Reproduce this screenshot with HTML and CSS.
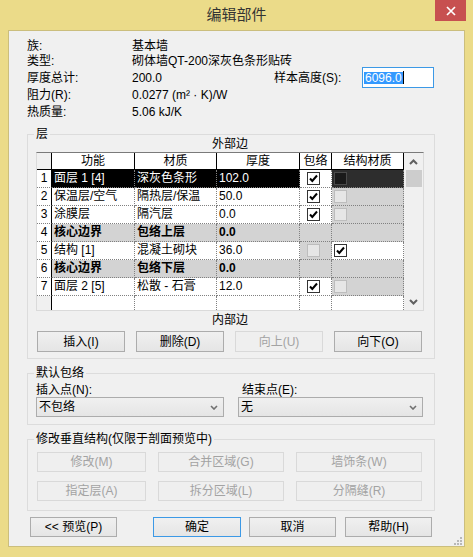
FILE: index.html
```html
<!DOCTYPE html>
<html>
<head>
<meta charset="utf-8">
<link rel="stylesheet" href="styles.css">
</head>
<body>
<div class="window">
  <div class="titlebar">
    <div class="title">编辑部件</div>
    <div class="close"><svg width="10" height="10" viewBox="0 0 10 10"><path d="M1 1L9 9M9 1L1 9" stroke="#fff" stroke-width="1.7" fill="none"/></svg></div>
  </div>
  <div class="client">
    <div class="info">
      <div>族:</div><div class="span3">基本墙</div>
      <div>类型:</div><div class="span3">砌体墙QT-200深灰色条形贴砖</div>
      <div>厚度总计:</div><div>200.0</div><div>样本高度(S):</div>
      <div class="input"><span class="selected">6096.0</span><span class="caret"></span></div>
      <div>阻力(R):</div><div class="span3">0.0277 (m² · K)/W</div>
      <div>热质量:</div><div class="span3">5.06 kJ/K</div>
    </div>

    <fieldset class="group layers">
      <legend>层</legend>
      <div class="edge top">外部边</div>
      <div class="table">
        <div class="grid">
          <div class="h corner"></div><div class="h">功能</div><div class="h">材质</div><div class="h">厚度</div><div class="h">包络</div><div class="h">结构材质</div>

          <div class="n">1</div><div class="c sel">面层 1 [4]</div><div class="c sel">深灰色条形</div><div class="c sel">102.0</div><div class="c wrap"><span class="cb on"></span></div><div class="c dark"><span class="cb darkbox"></span></div>

          <div class="n">2</div><div class="c">保温层/空气</div><div class="c">隔热层/保温</div><div class="c">50.0</div><div class="c wrap"><span class="cb on"></span></div><div class="c gray"><span class="cb off"></span></div>

          <div class="n">3</div><div class="c">涂膜层</div><div class="c">隔汽层</div><div class="c">0.0</div><div class="c wrap"><span class="cb on"></span></div><div class="c gray"><span class="cb off"></span></div>

          <div class="n">4</div><div class="c gray b">核心边界</div><div class="c gray b">包络上层</div><div class="c gray b">0.0</div><div class="c gray"></div><div class="c gray"></div>

          <div class="n">5</div><div class="c">结构 [1]</div><div class="c">混凝土砌块</div><div class="c">36.0</div><div class="c gray wrap"><span class="cb off"></span></div><div class="c"><span class="cb on"></span></div>

          <div class="n">6</div><div class="c gray b">核心边界</div><div class="c gray b">包络下层</div><div class="c gray b">0.0</div><div class="c gray"></div><div class="c gray"></div>

          <div class="n">7</div><div class="c">面层 2 [5]</div><div class="c">松散 - 石膏</div><div class="c">12.0</div><div class="c wrap"><span class="cb on"></span></div><div class="c gray"><span class="cb off"></span></div>

          <div class="n empty"></div><div class="c last"></div><div class="c last"></div><div class="c last"></div><div class="c last"></div><div class="c last"></div>
        </div>
        <div class="vscroll">
          <div class="arrow"><svg width="9" height="6" viewBox="0 0 9 6"><path d="M1 5L4.5 1.5L8 5" stroke="#606060" stroke-width="2" fill="none"/></svg></div>
          <div class="thumb"></div>
          <div class="track"></div>
          <div class="arrow"><svg width="9" height="6" viewBox="0 0 9 6"><path d="M1 1L4.5 4.5L8 1" stroke="#606060" stroke-width="2" fill="none"/></svg></div>
        </div>
      </div>
      <div class="edge bottom">内部边</div>
      <div class="btnrow4">
        <div class="btn">插入(I)</div>
        <div class="btn">删除(D)</div>
        <div class="btn dis">向上(U)</div>
        <div class="btn">向下(O)</div>
      </div>
    </fieldset>

    <fieldset class="group wrapgrp">
      <legend>默认包络</legend>
      <div class="wrapgrid">
        <div class="flabel">插入点(N):</div>
        <div class="flabel second">结束点(E):</div>
        <div class="combo"><span>不包络</span><svg width="8" height="5" viewBox="0 0 8 5"><path d="M1 1L4 4L7 1" stroke="#707070" stroke-width="1.6" fill="none"/></svg></div>
        <div class="combo"><span>无</span><svg width="8" height="5" viewBox="0 0 8 5"><path d="M1 1L4 4L7 1" stroke="#707070" stroke-width="1.6" fill="none"/></svg></div>
      </div>
    </fieldset>

    <fieldset class="group vert">
      <legend>修改垂直结构(仅限于剖面预览中)</legend>
      <div class="vertgrid">
        <div class="btn dis">修改(M)</div>
        <div class="btn dis">合并区域(G)</div>
        <div class="btn dis">墙饰条(W)</div>
        <div class="btn dis">指定层(A)</div>
        <div class="btn dis">拆分区域(L)</div>
        <div class="btn dis">分隔缝(R)</div>
      </div>
    </fieldset>

    <div class="bottombar">
      <div class="btn preview">&lt;&lt; 预览(P)</div>
      <div class="btn ok">确定</div>
      <div class="btn cancel">取消</div>
      <div class="btn help">帮助(H)</div>
    </div>

    <svg class="grip" width="9" height="9" viewBox="0 0 9 9">
      <rect x="7" y="1" width="2" height="2" fill="#B8B8B8"/>
      <rect x="4" y="4" width="2" height="2" fill="#B8B8B8"/>
      <rect x="7" y="4" width="2" height="2" fill="#B8B8B8"/>
      <rect x="1" y="7" width="2" height="2" fill="#B8B8B8"/>
      <rect x="4" y="7" width="2" height="2" fill="#B8B8B8"/>
      <rect x="7" y="7" width="2" height="2" fill="#B8B8B8"/>
    </svg>
  </div>
</div>
</body>
</html>
```

FILE: styles.css
```css
* { box-sizing: border-box; }
html, body { margin: 0; padding: 0; }
body {
  width: 473px;
  height: 557px;
  overflow: hidden;
  background: #EBDB89;
  font-family: "Liberation Sans", "Noto Sans CJK SC", sans-serif;
  font-size: 12px;
  color: #000;
}
.window {
  width: 473px;
  height: 557px;
  background: #EBDB89;
  display: flex;
  flex-direction: column;
}
.titlebar {
  height: 30px;
  display: grid;
  grid-template-columns: 1fr auto 1fr;
}
.title {
  grid-column: 2;
  align-self: center;
  font-size: 15px;
  line-height: 20px;
  color: #333;
}
.close {
  grid-column: 3;
  justify-self: end;
  align-self: start;
  width: 31px;
  height: 21px;
  margin-right: 7px;
  background: #C75050;
  display: flex;
  align-items: center;
  justify-content: center;
}
.client {
  margin: 0 8px 10px 8px;
  height: 517px;
  border: 1px solid #CBBE7D;
  background: #F0F0F0;
  position: relative;
}

/* info block */
.info {
  display: grid;
  grid-template-columns: 105px 142px 88px 72px;
  grid-template-rows: 14px 16px 17px 17px 17px;
  align-items: center;
  padding: 8px 0 0 18px;
  line-height: 14px;
  white-space: nowrap;
}
.span3 { grid-column: span 3; }
.input {
  height: 21px;
  border: 1px solid #3C99E6;
  background: #fff;
  display: flex;
  align-items: center;
  padding-left: 1px;
}
.selected {
  background: #3399FF;
  color: #fff;
  line-height: 12px;
  padding: 0 1px;
}
.caret {
  width: 1px;
  height: 13px;
  background: #000;
}

/* group boxes */
.group {
  margin: 8px 0 0 18px;
  width: 408px;
  border: 1px solid #DCDCDC;
  padding: 0;
  min-width: 0;
}
.group legend {
  padding: 0 2px;
  font-size: 12px;
  line-height: 12px;
}
.layers { padding: 0 0 6px 8px; }
.layers legend { margin-left: -2px; }

.edge {
  width: 388px;
  text-align: center;
}
.edge.top { line-height: 12px; margin-top: -2px; }
.edge.bottom { line-height: 14px; margin-top: 2px; }

/* layer table */
.table {
  width: 388px;
  margin-top: 2px;
  display: flex;
  border: 1px solid #DADADA;
  border-top-color: #7A7A7A;
  background: #fff;
}
.grid {
  display: grid;
  grid-template-columns: 15px 83px 82px 83px 32px 72px;
  grid-template-rows: 17px repeat(7, 18px) 14px;
  white-space: nowrap;
}
.grid > div { overflow: hidden; }
.h {
  border-right: 1px solid #000;
  border-bottom: 1px solid #000;
  text-align: center;
  line-height: 16px;
  background: #fff;
}
.h.corner { background: #F0F0F0; }
.n {
  border-right: 1px solid #000;
  border-bottom: 1px dotted #808080;
  text-align: center;
  line-height: 17px;
  background: #fff;
}
.n.empty { background: #F0F0F0; border-bottom: none; }
.c {
  border-right: 1px dotted #808080;
  border-bottom: 1px dotted #808080;
  padding-left: 2px;
  line-height: 17px;
  display: flex;
  align-items: center;
}
.c.last { border-bottom: none; }
.c.sel { background: #000; color: #fff; }
.c.gray { background: #D3D3D3; }
.c.dark { background: #2D2D2D; }
.c.b { font-weight: bold; }
.c.wrap { padding-left: 7px; }

.cb {
  width: 13px;
  height: 13px;
  border: 1px solid #333;
  background: #fff;
  display: block;
  flex: none;
}
.cb.on {
  background: #fff url("data:image/svg+xml,%3Csvg xmlns='http://www.w3.org/2000/svg' width='11' height='11' viewBox='0 0 11 11'%3E%3Cpath d='M2 5.5L4.3 8L9 2.5' stroke='%23000' stroke-width='2' fill='none'/%3E%3C/svg%3E") no-repeat center;
}
.cb.off { border-color: #BDBDBD; background: #E6E6E6; }
.cb.darkbox { border-color: #4A4A4A; background: #1A1A1A; }

.vscroll {
  width: 19px;
  display: flex;
  flex-direction: column;
  background: #F0F0F0;
}
.arrow {
  height: 17px;
  display: flex;
  align-items: center;
  justify-content: center;
}
.thumb {
  height: 17px;
  margin: 0 1px 0 2px;
  background: #CDCDCD;
}
.track { flex: 1; }

/* buttons */
.btn {
  height: 21px;
  border: 1px solid #ACACAC;
  background: linear-gradient(#F0F0F0, #E5E5E5);
  display: flex;
  align-items: center;
  justify-content: center;
  line-height: 14px;
  white-space: nowrap;
}
.btn.dis {
  border-color: #D9D9D9;
  background: #EFEFEF;
  color: #A3A3A3;
}
.btnrow4 {
  margin: 4px 0 0 1px;
  display: grid;
  grid-template-columns: repeat(4, 88px);
  column-gap: 11px;
}

/* default wrapping */
.wrapgrp { padding: 0 0 7px 8px; }
.wrapgrp legend { margin-left: -2px; }
.wrapgrid {
  display: grid;
  grid-template-columns: 188px 185px;
  column-gap: 14px;
  grid-template-rows: 14px 20px;
  margin-top: 4px;
  line-height: 14px;
}
.flabel.second { padding-left: 4px; }
.combo {
  height: 20px;
  border: 1px solid #ACACAC;
  background: linear-gradient(#F0F0F0, #E5E5E5);
  display: flex;
  align-items: center;
  justify-content: space-between;
  padding: 0 5px 0 2px;
}

/* vertical structure */
.vert { padding: 0 0 9px 9px; }
.vert legend { margin-left: -3px; }
.vertgrid {
  margin-top: 7px;
  display: grid;
  grid-template-columns: 109px 126px 126px;
  grid-template-rows: 20px 20px;
  column-gap: 12px;
  row-gap: 9px;
}
.vertgrid .btn { height: 20px; }

/* bottom bar */
.bottombar {
  display: flex;
  margin: 6px 0 0 21px;
}
.bottombar .btn { height: 20px; width: 87px; }
.bottombar .ok { width: 88px; margin-left: 36px; border-color: #3C99E6; }
.bottombar .cancel { margin-left: 8px; }
.bottombar .help { margin-left: 9px; }

.grip {
  position: absolute;
  right: 2px;
  bottom: 1px;
}
```
